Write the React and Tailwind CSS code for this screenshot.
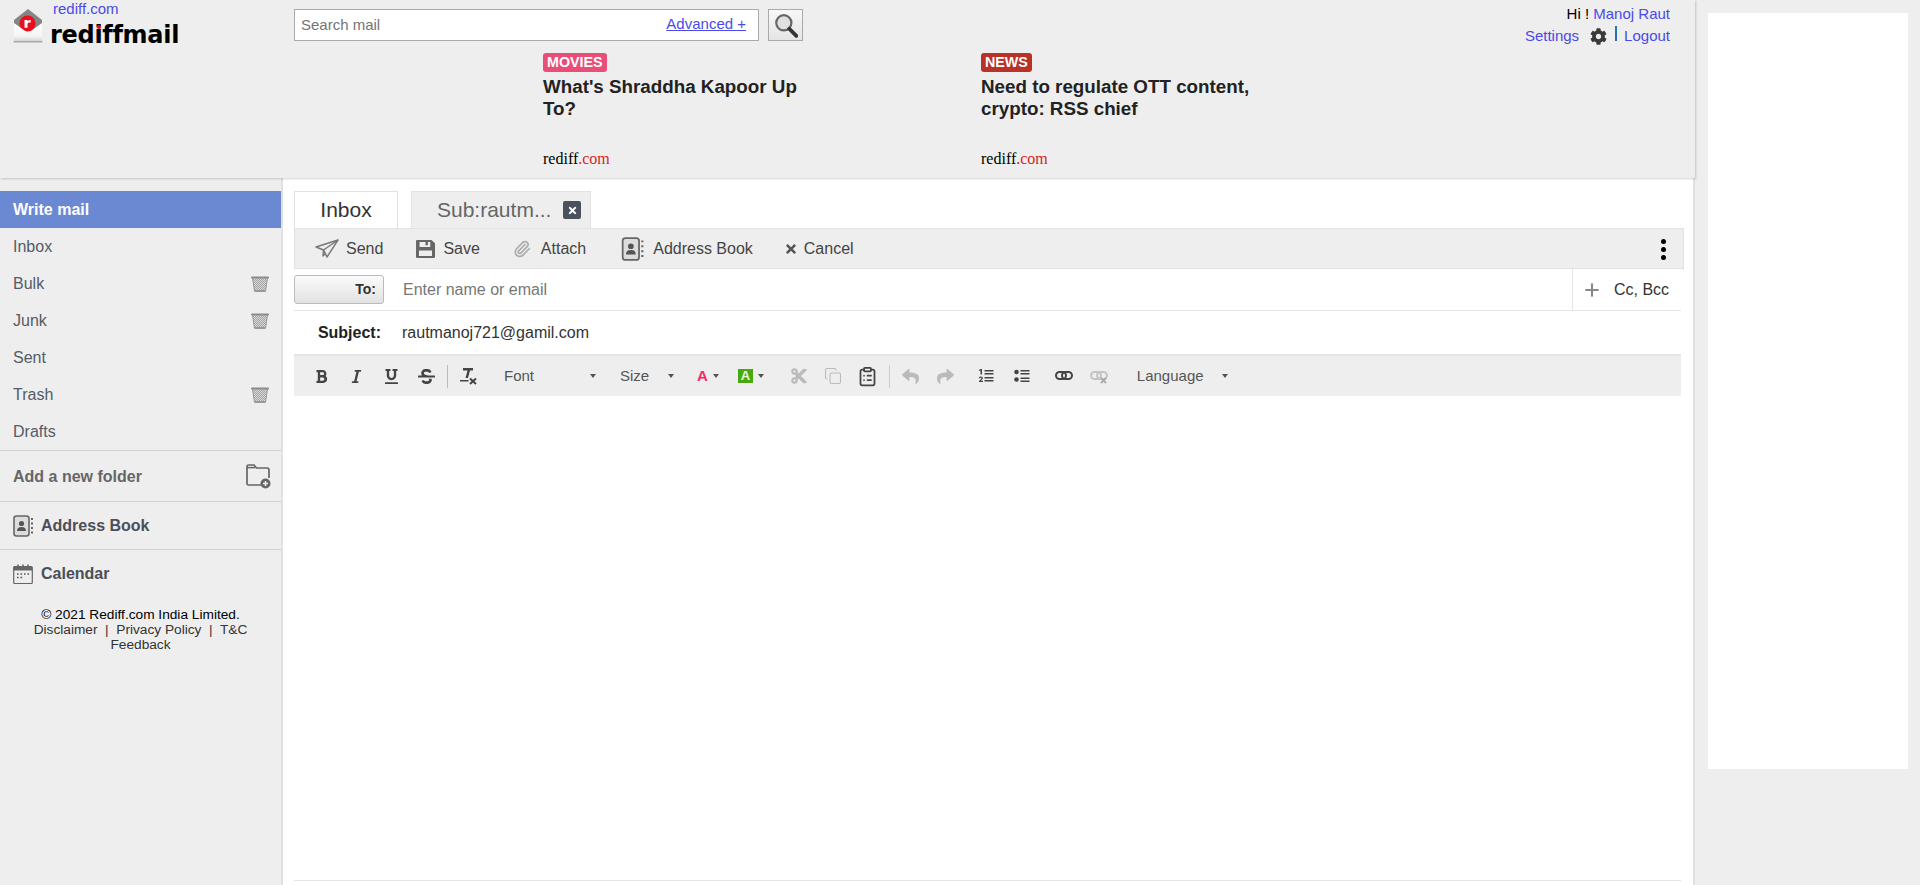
import React from "react";
import { FaCog, FaBold, FaItalic, FaUnderline, FaStrikethrough, FaCut, FaReply, FaShare, FaTimes } from "react-icons/fa";
import { Copy, ClipboardList, Paperclip, Plus } from "lucide-react";

const Envelope = () => (
  <svg width="30" height="35" viewBox="0 0 30 35" className="shrink-0">
    <defs>
      <linearGradient id="envBody" x1="0" y1="0" x2="0" y2="1">
        <stop offset="0" stopColor="#ffffff" />
        <stop offset="0.7" stopColor="#f4f4f4" />
        <stop offset="1" stopColor="#d0d0d0" />
      </linearGradient>
    </defs>
    <path d="M15 0 L29 11 L29 22 L1 22 L1 11 Z" fill="#858585" />
    <circle cx="14.500" cy="14.500" r="8" fill="#e8101c" />
    <path d="M11.500 11 h3 v1.200 q1.500-1.600 3.200-1.200 v2.600 q-2.600-.4-3.200 1.200 v4 h-3 Z" fill="#fff" />
    <path d="M1 14 L15 24 L29 14 L29 33 L1 33 Z" fill="url(#envBody)" />
    <rect x="0.500" y="32" width="29" height="1.500" fill="#a8a8a8" />
  </svg>
);

const Basket = () => (
  <svg width="18" height="16" viewBox="0 0 18 16">
    <defs>
      <pattern id="mesh" width="2" height="2" patternUnits="userSpaceOnUse">
        <rect width="2" height="2" fill="#a4a4a4" />
        <rect width="1" height="1" fill="#d8d8d8" />
        <rect x="1" y="1" width="1" height="1" fill="#d8d8d8" />
      </pattern>
    </defs>
    <path d="M1.500 2 H16.500 L14.500 15.500 H3.500 Z" fill="url(#mesh)" />
    <path d="M1.500 2 L3.500 15.500 M16.500 2 L14.500 15.500" stroke="#999" strokeWidth="1" />
    <rect x="0" y="0.500" width="18" height="2" rx="1" fill="#8b8b8b" />
    <rect x="3.500" y="14" width="11" height="2" rx="1" fill="#999" />
  </svg>
);

const ABook = ({ w = 20, h = 22 }) => (
  <svg width={w} height={h} viewBox="0 0 20 22" fill="none">
    <rect x="1" y="1" width="15" height="20" rx="2.500" stroke="#666" strokeWidth="1.600" fill="#ddd" />
    <circle cx="8.500" cy="8.500" r="2.600" fill="#555" />
    <path d="M4 16 q0-4 4.500-4 t4.500 4 Z" fill="#555" />
    <path d="M18 4 h2 M18 8.500 h2 M18 13 h2 M18 17.500 h2" stroke="#666" strokeWidth="1.800" />
  </svg>
);

const Calendar = () => (
  <svg width="20" height="20" viewBox="0 0 20 20" fill="none">
    <rect x="0.700" y="2.500" width="18.600" height="17" rx="1" fill="#eee" stroke="#666" strokeWidth="1.200" />
    <rect x="1" y="3" width="18" height="3.500" fill="#666" />
    <path d="M5 0.500 v3.500 M10 0.500 v3.500 M15 0.500 v3.500" stroke="#666" strokeWidth="1.600" />
    <path d="M4 10 h1.600 M7.500 10 h1.600 M11 10 h1.600 M14.500 10 h1.600 M4 13.500 h1.600 M7.500 13.500 h1.600" stroke="#555" strokeWidth="1.600" />
  </svg>
);

const FolderAdd = () => (
  <svg width="25" height="25" viewBox="0 0 25 25" fill="none">
    <path d="M1 20 V2.500 A1.500 1.500 0 0 1 2.500 1 H8 L10.500 4 H21 A2 2 0 0 1 23 6 V14 M15 21 H2.500 A1.500 1.500 0 0 1 1 19.500" stroke="#666" strokeWidth="1.700" />
    <path d="M1 3.600 H9" stroke="#666" strokeWidth="1.500" />
    <circle cx="19.500" cy="19.500" r="5" fill="#666" />
    <path d="M17 19.500 h5 M19.500 17 v5" stroke="#eee" strokeWidth="1.500" />
  </svg>
);

const Plane = () => (
  <svg width="24" height="20" viewBox="0 0 24 20" fill="none" stroke="#777" strokeWidth="1.400" strokeLinejoin="round">
    <path d="M1 8 L23 1 L12 18 L8.500 11 Z" />
    <path d="M23 1 L8.500 11 L8 17 L11 14" />
  </svg>
);

const Floppy = () => (
  <svg width="19" height="18" viewBox="0 0 16 17" preserveAspectRatio="none">
    <path fillRule="evenodd" d="M0 1 Q0 0 1 0 H13 L16 3 V16 Q16 17 15 17 H1 Q0 17 0 16 Z M3 2 V6.500 H12 V2 H10 V5 H8 V2 Z M2.500 10 V15.200 H13.500 V10 Z" fill="#666" />
  </svg>
);

const Search = () => (
  <svg width="24" height="25" viewBox="0 0 22 23" fill="none">
    <circle cx="9" cy="9" r="7" stroke="#666" strokeWidth="2" fill="#e0e0e0" />
    <path d="M14 14.500 L20.500 21" stroke="#333" strokeWidth="3.500" strokeLinecap="round" />
  </svg>
);

const ClearFormat = () => (
  <svg width="18" height="18" viewBox="0 0 18 18">
    <path d="M4 1 H14 V3.500 H11 L9 11 H6.500 L8.500 3.500 H4 Z" fill="#444" />
    <rect x="1" y="13" width="8.500" height="1.500" fill="#444" />
    <path d="M11 11.500 L17 17 M17 11.500 L11 17" stroke="#444" strokeWidth="2" />
  </svg>
);

const Chain = ({ off }) => (
  <svg width="18" height="16" viewBox="0 0 18 16" fill="none">
    <rect x="1" y="4" width="10" height="7" rx="3.500" stroke={off ? "#c4c4c4" : "#444"} strokeWidth="2" />
    <rect x="7" y="4" width="10" height="7" rx="3.500" stroke={off ? "#c4c4c4" : "#444"} strokeWidth="2" />
    {off && <path d="M11 10 L16 15 M16 10 L11 15" stroke="#aaa" strokeWidth="1.800" />}
  </svg>
);

const OList = () => (
  <svg width="16" height="16" viewBox="0 0 16 16" fill="#444">
    <path d="M2.500 1 H4 V6.500 H2.500 V2.500 L1 3 V2 Z" />
    <path d="M1 9.500 Q1 8.500 3 8.500 Q5 8.500 5 10 Q5 11.200 2.800 12.800 H5 V14 H1 V13 Q3.600 11 3.600 10 Q3.600 9.600 3 9.600 Q2.400 9.600 2.400 10.200 H1 Z" />
    <rect x="6.500" y="2" width="9" height="1.500" />
    <rect x="6.500" y="5" width="9" height="1.500" />
    <rect x="6.500" y="9" width="9" height="1.500" />
    <rect x="6.500" y="12" width="9" height="1.500" />
  </svg>
);

const UList = () => (
  <svg width="16" height="16" viewBox="0 0 16 16" fill="#444">
    <circle cx="2.500" cy="4" r="2.300" />
    <circle cx="2.500" cy="11.500" r="2.300" />
    <rect x="6.500" y="2" width="9" height="1.500" />
    <rect x="6.500" y="5" width="9" height="1.500" />
    <rect x="6.500" y="9.500" width="9" height="1.500" />
    <rect x="6.500" y="12.500" width="9" height="1.500" />
  </svg>
);

const Caret = ({ className = "" }) => (
  <span className={`inline-block w-0 h-0 border-l-[3.500px] border-r-[3.500px] border-t-[4px] border-l-transparent border-r-transparent border-t-[#555] ${className}`} />
);

const Cell = ({ w = "w-[35px]", children }) => (
  <span className={`${w} h-[24px] flex items-center justify-center shrink-0`}>{children}</span>
);

const SideRow = ({ label, bin }) => (
  <div className="h-[37px] flex items-center justify-between pl-[13px] pr-[12px] text-[16px] text-[#555b68]">
    <span>{label}</span>
    {bin && <Basket />}
  </div>
);

const News = ({ tag, tagClass, lines }) => (
  <div className="w-[438px] shrink-0">
    <div className={`block w-fit h-[19px] px-[4px] rounded-[3px] text-white font-bold text-[14.300px] leading-[18px] ${tagClass}`}>{tag}</div>
    <div className="w-[285px] mt-[4px] h-[75px] text-[18.800px] leading-[22px] font-bold text-[#222]">{lines}</div>
    <div className="text-[16px] leading-[16px] font-['Liberation_Serif',serif] text-black">rediff<span className="text-[#d81e1e]">.com</span></div>
  </div>
);

export default function App() {
  return (
    <div className="h-[885px] overflow-hidden flex bg-[#eeeeee] font-['Liberation_Sans',Arial,sans-serif]">
      <div className="w-[1695px] shrink-0 flex flex-col">
        <header className="h-[178px] shrink-0 bg-[#eeeeee] shadow-[1px_1px_2px_rgba(0,0,0,0.18)] relative z-10 flex flex-col">
          <div className="h-[53px] flex shrink-0">
            <div className="w-[294px] shrink-0 flex pl-[13px] pt-[9px]">
              <Envelope />
              <div className="ml-[7px] -mt-[9px]">
                <a className="block ml-[3px] text-[15px] leading-[17px] text-[#4a4ae8]">rediff.com</a>
                <div className="relative mt-[3px] text-[24px] leading-[30px] font-black text-black font-['DejaVu_Sans',sans-serif] tracking-[-0.300px]">
                  rediffmail
                  <span className="absolute left-[47px] top-[5px] w-[4px] h-[4px] rounded-full bg-[#e8101c]" />
                </div>
              </div>
            </div>
            <div className="pt-[9px] flex shrink-0">
              <div className="w-[465px] h-[32px] border border-[#aaa] bg-white flex items-center justify-between pl-[6px] pr-[12px]">
                <span className="text-[15px] text-[#757575]">Search mail</span>
                <a className="text-[15px] text-[#4a4ae8] underline -mt-[1px]">Advanced +</a>
              </div>
              <button className="ml-[9px] w-[35px] h-[32px] border border-[#aaa] bg-gradient-to-b from-[#f8f8f8] to-[#e4e4e4] flex items-center justify-center">
                <Search />
              </button>
            </div>
            <div className="flex-1 pr-[25px] pt-[5px] flex flex-col items-end text-[15px] leading-[18px]">
              <div className="text-black">Hi ! <a className="text-[#4a4ae8]">Manoj Raut</a></div>
              <div className="flex items-center mt-[4px] text-[#4a4ae8]">
                <a>Settings</a>
                <FaCog className="ml-[11px] text-[#3a3a3a]" size={17} />
                <span className="ml-[8px] w-[2px] h-[15px] bg-[#2a6fb5] -mt-[5px]" />
                <a className="ml-[7px]">Logout</a>
              </div>
            </div>
          </div>
          <div className="pl-[543px] flex">
            <News tag="MOVIES" tagClass="bg-[#e84e78]" lines="What's Shraddha Kapoor Up To?" />
            <News tag="NEWS" tagClass="bg-[#b83228]" lines="Need to regulate OTT content, crypto: RSS chief" />
          </div>
        </header>

        <div className="flex-1 flex min-h-0">
          <aside className="w-[283px] shrink-0 bg-[#eeeeee] border-r-2 border-[#e0e0e0] pt-[13px]">
            <div className="h-[37px] flex items-center pl-[13px] bg-[#6b89d2] text-white font-bold text-[16px]">Write mail</div>
            <SideRow label="Inbox" />
            <SideRow label="Bulk" bin />
            <SideRow label="Junk" bin />
            <SideRow label="Sent" />
            <SideRow label="Trash" bin />
            <SideRow label="Drafts" />
            <div className="h-[51px] pt-[1px] border-t border-[#d0d0d0] flex items-center justify-between pl-[13px] pr-[10px] font-bold text-[16px] text-[#666]">
              <span>Add a new folder</span>
              <FolderAdd />
            </div>
            <div className="h-[48px] pt-[1px] border-t border-[#d0d0d0] flex items-center pl-[13px] font-bold text-[16px] text-[#4c4f58]">
              <ABook />
              <span className="ml-[8px]">Address Book</span>
            </div>
            <div className="h-[48px] pt-[1px] border-t border-[#d0d0d0] flex items-center pl-[13px] font-bold text-[16px] text-[#4c4f58]">
              <Calendar />
              <span className="ml-[8px]">Calendar</span>
            </div>
            <div className="mt-[10px] text-center text-[13.700px] leading-[15px] text-[#333]">
              <div className="text-black">© 2021 Rediff.com India Limited.</div>
              <div>Disclaimer&nbsp; |&nbsp; Privacy Policy&nbsp; |&nbsp; T&amp;C</div>
              <div>Feedback</div>
            </div>
          </aside>

          <main className="flex-1 min-w-0 bg-white border-r-2 border-[#e0e0e0] pl-[11px] pt-[13px] flex flex-col">
            <div className="flex h-[37px] shrink-0">
              <div className="w-[104px] border border-b-0 border-[#e2e2e2] bg-white flex items-center justify-center text-[21px] text-[#333]">Inbox</div>
              <div className="ml-[13px] w-[180px] border border-b-0 border-[#e2e2e2] bg-[#eeeeee] flex items-center text-[21px] text-[#666] pl-[25px]">
                <span>Sub:rautm...</span>
                <span className="ml-[12px] w-[18px] h-[18px] rounded-[2px] bg-[#4a505c] flex items-center justify-center"><FaTimes className="text-white" size={11} /></span>
              </div>
            </div>
            <div className="h-[41px] w-[1390px] shrink-0 pt-[1px] bg-[#eeeeee] border border-[#e2e2e2] flex items-center text-[16px] text-[#444] relative">
              <span className="ml-[20px] flex"><Plane /></span>
              <span className="ml-[7px]">Send</span>
              <span className="ml-[33px] flex"><Floppy /></span>
              <span className="ml-[8px]">Save</span>
              <span className="ml-[33px] flex"><Paperclip size={18} color="#aaa" strokeWidth={2.200} /></span>
              <span className="ml-[10px]">Attach</span>
              <span className="ml-[35px] flex"><ABook w={23} h={24} /></span>
              <span className="ml-[9px]">Address Book</span>
              <span className="ml-[31px] flex"><FaTimes size={14} color="#555" /></span>
              <span className="ml-[6px]">Cancel</span>
              <span className="ml-auto mr-[17px] flex flex-col gap-[3px]">
                <i className="block w-[5px] h-[5px] rounded-full bg-black" />
                <i className="block w-[5px] h-[5px] rounded-full bg-black" />
                <i className="block w-[5px] h-[5px] rounded-full bg-black" />
              </span>
            </div>
            <div className="h-[42px] w-[1387px] shrink-0 border-b border-[#e5e5e5] flex items-center">
              <button className="w-[90px] h-[29px] border border-[#bbb] rounded-[3px] bg-gradient-to-b from-[#fbfbfb] to-[#e2e2e2] text-right pr-[7px] font-bold text-[14px] text-[#333]">To:</button>
              <span className="ml-[19px] text-[16px] text-[#777]">Enter name or email</span>
              <div className="ml-auto w-[109px] h-full border-l border-[#e5e5e5] flex items-center pl-[9px] text-[16px] text-[#333]">
                <Plus size={20} color="#888" strokeWidth={2.500} />
                <span className="ml-[12px]">Cc, Bcc</span>
              </div>
            </div>
            <div className="h-[43px] shrink-0 flex items-center text-[16px]">
              <span className="w-[87px] text-right font-bold text-[#222] shrink-0">Subject:</span>
              <span className="ml-[21px] text-[#333]">rautmanoj721@gamil.com</span>
            </div>
            <div className="h-[42px] w-[1387px] shrink-0 bg-[#eeeeee] border-t-2 border-[#e4e4e4] flex items-center text-[#555] pl-[10px]">
              <Cell><FaBold size={15} color="#444" /></Cell>
              <Cell><FaItalic size={15} color="#444" /></Cell>
              <Cell><FaUnderline size={15} color="#444" /></Cell>
              <Cell><FaStrikethrough size={17} color="#444" /></Cell>
              <span className="w-[1px] h-[23px] bg-[#bbb] ml-[3px]" />
              <span className="ml-[2px] flex"><Cell><ClearFormat /></Cell></span>
              <span className="ml-[19px] w-[92px] text-[15px] text-[#555] flex items-center justify-between shrink-0">Font <Caret /></span>
              <span className="ml-[24px] w-[54px] text-[15px] text-[#555] flex items-center justify-between shrink-0">Size <Caret /></span>
              <span className="ml-[23px] flex items-center shrink-0"><span className="text-[15px] font-bold text-[#ee2d68]">A</span><Caret className="ml-[5px]" /></span>
              <span className="ml-[19px] flex items-center shrink-0"><span className="w-[15px] h-[14px] bg-[#4aa80f] text-[#e8f8d8] text-[13px] font-bold leading-[14px] text-center">A</span><Caret className="ml-[5px]" /></span>
              <Cell w="w-[34px] ml-[18px]"><FaCut size={18} color="#bbb" /></Cell>
              <Cell w="w-[35px]"><Copy size={18} color="#bbb" strokeWidth={1.500} /></Cell>
              <Cell w="w-[34px]"><ClipboardList size={21} color="#444" strokeWidth={2} /></Cell>
              <span className="w-[1px] h-[23px] bg-[#ccc] ml-[4px]" />
              <Cell w="w-[35px] ml-[3px]"><FaReply size={17} color="#bbb" /></Cell>
              <Cell><FaShare size={17} color="#bbb" /></Cell>
              <Cell w="w-[35px] ml-[6px]"><OListIcon /></Cell>
              <Cell w="w-[35px] ml-[1px]"><UList /></Cell>
              <Cell w="w-[35px] ml-[7px]"><Chain /></Cell>
              <Cell><Chain off /></Cell>
              <span className="ml-[20px] w-[91px] text-[15px] text-[#555] flex items-center justify-between shrink-0">Language <Caret /></span>
            </div>
            <div className="flex-1 w-[1387px]" />
            <div className="h-[1px] w-[1387px] bg-[#e4e4e4] mb-[4px] shrink-0" />
          </main>
        </div>
      </div>
      <div className="flex-1 pl-[13px] pt-[13px]">
        <div className="w-[200px] h-[756px] bg-white" />
      </div>
    </div>
  );
}

function OListIcon() {
  return <OList />;
}
